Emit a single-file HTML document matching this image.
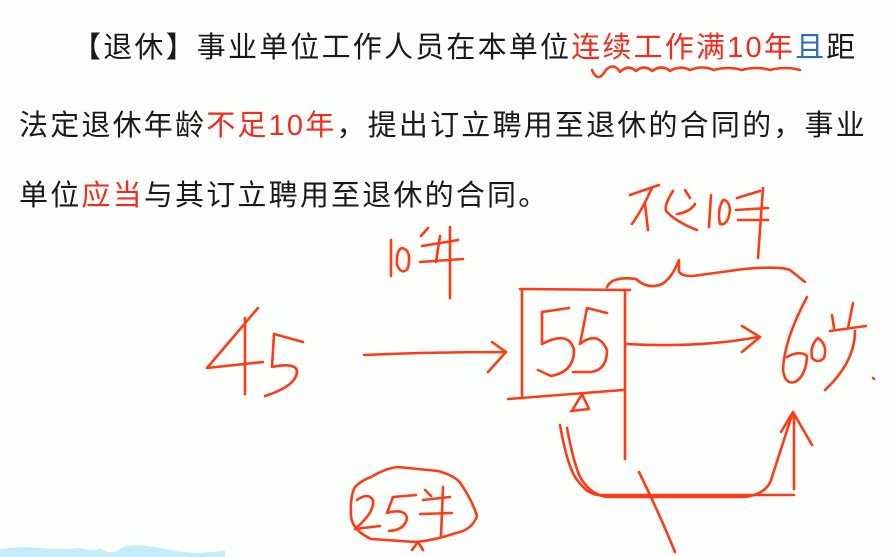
<!DOCTYPE html>
<html><head><meta charset="utf-8"><style>
html,body{margin:0;padding:0;width:892px;height:557px;overflow:hidden;background:#fdfffc;}
.t{position:absolute;white-space:nowrap;font-family:"Liberation Sans","Noto Sans CJK SC",sans-serif;font-size:29px;letter-spacing:2.2px;color:#1a1a1a;line-height:30px;}
.r{color:#f42a1c}.b{color:#2a6db8}
svg{position:absolute;left:0;top:0}
</style></head><body>
<div class="t" style="left:72px;top:33px">【退休】事业单位工作人员在本单位<span class="r">连续工作满10年</span><span class="b">且</span>距</div>
<div class="t" style="left:19px;top:111px">法定退休年龄<span class="r">不足10年</span>，提出订立聘用至退休的合同的，事业</div>
<div class="t" style="left:19px;top:181px">单位<span class="r">应当</span>与其订立聘用至退休的合同。</div>
<svg width="892" height="557" viewBox="0 0 892 557">
<path d="M0 549 Q20 546 40 548 T80 548 Q95 552 100 548 Q110 556 120 549 T160 548 T200 553 L225 551 L225 557 L0 557Z" fill="#c3ecf8"/>
<g fill="none" stroke="#ff3b17" stroke-width="2.6" stroke-linecap="round" stroke-linejoin="round">
<path d="M592 70 Q598 84 606 70 Q614 62 620 72 Q628 64 636 71 Q644 64 652 71 Q662 64 670 71 Q680 65 690 70 Q702 65 714 70 Q728 66 742 70 Q756 66 770 70 Q785 66 800 70"/>
<!-- 45 -->
<path d="M258 308 L207 368 L263 362"/>
<path d="M245 318 L245 394"/>
<path d="M303 342 L274 334 L272 367 Q297 362 297 372 Q296 386 265 396"/>
<!-- arrow 1 -->
<path d="M364 355 Q430 352 506 352 M492 342 L506 352 L488 372"/>
<!-- 10年 small -->
<path d="M391 240 L391 276"/>
<path d="M402 248 Q396 250 397 265 Q402 276 408 268 Q412 250 402 248Z"/>
<path d="M421 236 L428 228 M422 246 L458 240 M420 262 L463 259 M440 236 L436 262 M450 227 L450 298"/>
<!-- box -->
<path d="M520 289 L630 290 M522 289 L522 396 M625 292 L625 459 M508 399 L623 390"/>
<!-- 55 -->
<path d="M569 308 L542 312 L542 344 Q569 330 574 350 Q574 372 551 376 L538 370"/>
<path d="M607 313 L587 308 L580 344 Q598 330 607 350 Q607 370 591 372 L573 372"/>
<path d="M573 409 L582 394 L589 409 L571 411"/>
<!-- arrow 2 -->
<path d="M627 344 Q700 348 758 337 M742 326 L760 337 L742 352"/>
<!-- 60岁 -->
<path d="M807 297 Q784 340 783 370 Q785 385 795 382 Q806 376 807 356 Q800 350 787 357"/>
<path d="M818 338 Q810 345 812 358 Q818 364 824 358 Q828 345 818 338Z"/>
<path d="M832 315 L834 328 M853 303 L848 328 M866 326 L830 331 M855 331 Q855 362 825 390"/>
<path d="M873 378 L874 379"/>
<!-- brace -->
<path d="M607 287 Q612 276 636 279 Q648 290 662 284 Q672 278 679 260 L679 272 Q684 278 700 275 L744 269 Q780 266 790 270 L805 282"/>
<!-- 不足10年 -->
<path d="M630 195 L659 185 M652 188 Q642 210 632 224 M645 204 L648 230"/>
<path d="M673 191 Q664 205 666 211 Q676 222 697 230 M677 214 Q690 212 695 204 M685 190 L690 198"/>
<path d="M711 195 L709 227"/>
<path d="M723 200 Q717 210 720 224 Q728 226 730 210 Q729 200 723 200Z"/>
<path d="M737 198 L760 191 M736 210 L768 208 M738 220 L768 220 M763 188 L758 258"/>
<!-- bottom curves -->
<path d="M560 425 Q568 470 578 481 Q588 495 600 495 L794 495"/>
<path d="M567 428 Q575 470 582 480 Q592 496 609 497 L745 497 Q768 494 772 477 Q784 440 792 415"/>
<path d="M794 415 L794 489 M781 432 L793 412 L812 445"/>
<path d="M639 472 Q660 515 675 552"/>
<!-- circle 25年 -->
<path d="M371 477 Q386 468 398 467 L438 471 Q456 476 461 484 Q472 500 477 516 Q472 530 456 533 Q436 540 416 542 L371 539 Q352 530 351 516 Q350 496 355 487 Q362 480 371 477Z"/>
<path d="M357 500 Q368 492 373 500 Q375 512 355 529 L380 526"/>
<path d="M416 495 L393 497 L387 513 Q405 508 407 518 Q405 530 389 531"/>
<path d="M443 487 L441 536 M423 500 L450 497 M420 514 L452 513 M425 490 L431 496"/>
<path d="M412 550 L418 542 L423 550"/>
</g></svg>
</body></html>
